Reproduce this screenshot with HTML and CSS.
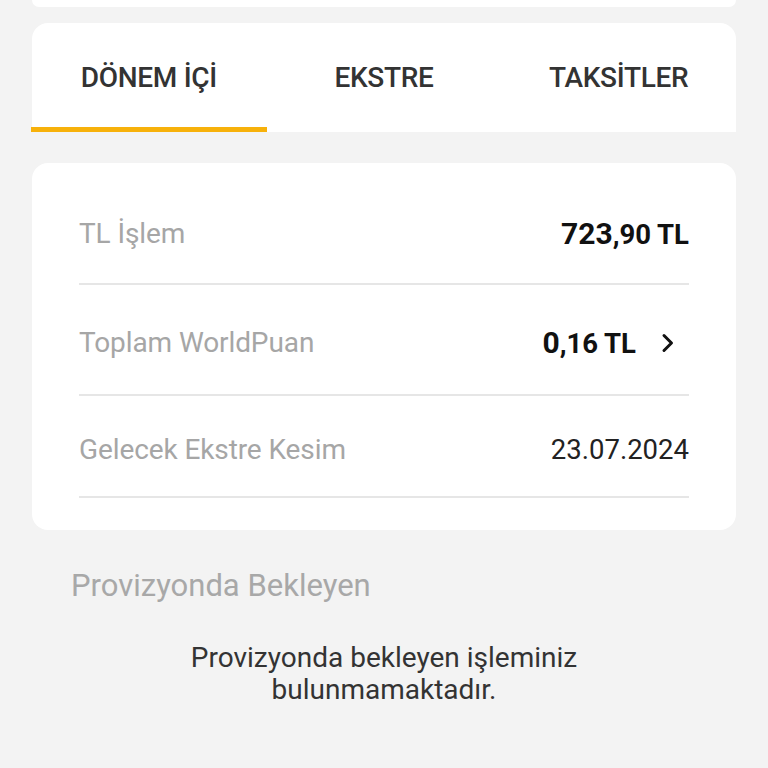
FILE: index.html
```html
<!DOCTYPE html>
<html lang="tr">
<head>
<meta charset="utf-8">
<link rel="stylesheet" href="styles.css">
</head>
<body>
<div class="page">
  <div class="top-card"></div>
  <div class="tabs">
    <div class="tab active">DÖNEM İÇİ</div>
    <div class="tab">EKSTRE</div>
    <div class="tab">TAKSİTLER</div>
  </div>
  <div class="card">
    <div class="row">
      <span class="label">TL İşlem</span>
      <span class="value"><span class="big">723</span>,90 TL</span>
    </div>
    <div class="row">
      <span class="label">Toplam WorldPuan</span>
      <span class="value link"><span class="big">0</span>,16 TL
        <svg class="chev" width="16" height="24" viewBox="0 0 16 24"><path d="M4 4.5 L11.5 12 L4 19.5" fill="none" stroke="#111" stroke-width="3" stroke-linecap="round" stroke-linejoin="round"/></svg>
      </span>
    </div>
    <div class="row">
      <span class="label">Gelecek Ekstre Kesim</span>
      <span class="value plain">23.07.2024</span>
    </div>
  </div>
  <div class="section-title">Provizyonda Bekleyen</div>
  <div class="empty">Provizyonda bekleyen işleminiz<br>bulunmamaktadır.</div>
</div>
</body>
</html>
```
FILE: styles.css
```css
html, body {
  margin: 0;
  padding: 0;
  background: #f3f3f3;
  font-family: Roboto, "Noto Sans", sans-serif;
}
.page {
  width: 768px;
  height: 768px;
  overflow: hidden;
  display: flex;
  flex-direction: column;
  padding: 0 32px;
  box-sizing: border-box;
}
.top-card {
  height: 7px;
  background: #fff;
  border-radius: 0 0 16px 16px;
  flex: none;
}
.tabs {
  margin-top: 16px;
  height: 109px;
  background: #fff;
  border-radius: 16px 16px 0 0;
  display: grid;
  grid-template-columns: repeat(3, 1fr);
  flex: none;
}
.tab {
  display: flex;
  align-items: center;
  justify-content: center;
  padding-top: 4px;
  font-size: 28px;
  font-weight: 500;
  color: #333;
  letter-spacing: -0.3px;
  box-sizing: border-box;
}
.tab.active {
  border-bottom: 5px solid #f7b10a;
  margin-left: -1px;
}
.tab:not(.active) {
  padding-bottom: 5px;
}
.card {
  margin-top: 31px;
  background: #fff;
  border-radius: 16px;
  padding: 15px 47px 32px;
  flex: none;
}
.row {
  display: flex;
  justify-content: space-between;
  align-items: center;
  padding-top: 6px;
  border-bottom: 2px solid #e6e6e6;
  box-sizing: border-box;
}
.row:nth-child(1) { height: 107px; }
.row:nth-child(2) { height: 111px; }
.row:nth-child(3) { height: 102px; }
.label {
  font-size: 28px;
  color: #a6a6a6;
  letter-spacing: -0.1px;
}
.value {
  font-size: 27.5px;
  font-weight: 700;
  color: #111;
  display: flex;
  align-items: baseline;
}
.value .big {
  font-size: 30px;
}
.value.plain {
  font-weight: 400;
  font-size: 27.5px;
  color: #222;
}
.chev {
  margin-left: 24px;
  align-self: center;
  margin-right: 13px;
}
.section-title {
  margin-top: 37px;
  margin-left: 39px;
  font-size: 31px;
  color: #a8a8a8;
}
.empty {
  margin-top: 38px;
  text-align: center;
  font-size: 28px;
  line-height: 32px;
  color: #333;
}
```
